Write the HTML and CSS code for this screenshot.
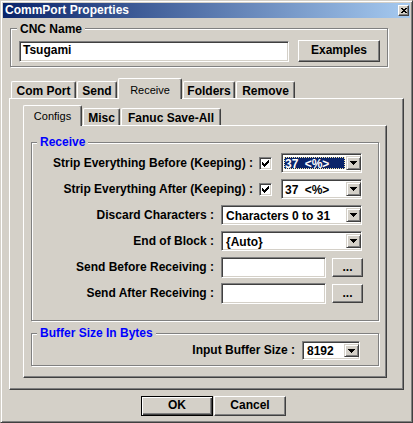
FILE: index.html
```html
<!DOCTYPE html>
<html lang="en">
<head>
    <meta charset="UTF-8">
    <title>CommPort Properties</title>
    <link rel="stylesheet" href="styles.css">
</head>
<body>
    <div class="window">
        <div class="titlebar">
            <span class="title">CommPort Properties</span>
            <span class="close">
                <svg width="6" height="5" viewBox="0 0 6 5" shape-rendering="crispEdges"><path d="M0 0h2v1h-2z M4 0h2v1h-2z M1 1h4v1h-4z M2 2h2v1h-2z M1 3h4v1h-4z M0 4h2v1h-2z M4 4h2v1h-2z" fill="#000"/></svg>
            </span>
        </div>

        <div class="client">
            <!-- CNC name -->
            <div class="group cnc">
                <div class="legend">CNC Name</div>
                <div class="cnc-row">
                    <div class="field cnc-name">Tsugami</div>
                    <div class="btn examples">Examples</div>
                </div>
            </div>

            <!-- main tabs -->
            <div class="tabs outer-tabs">
                <div class="tab w-com">Com Port</div>
                <div class="tab w-send">Send</div>
                <div class="tab active w-receive">Receive</div>
                <div class="tab w-folders">Folders</div>
                <div class="tab w-remove">Remove</div>
            </div>
            <div class="panel outer-panel">
                <div class="tabs inner-tabs">
                    <div class="tab active w-configs">Configs</div>
                    <div class="tab w-misc">Misc</div>
                    <div class="tab w-fanuc">Fanuc Save-All</div>
                </div>
                <div class="panel inner-panel">
                    <div class="group receive">
                        <div class="legend blue">Receive</div>
                        <div class="rows">
                            <div class="row">
                                <span class="label tight">Strip Everything Before (Keeping) :</span>
                                <span class="check"><svg width="7" height="7" viewBox="0 0 7 7" shape-rendering="crispEdges"><path d="M0 2h1v3h-1z M1 3h1v3h-1z M2 4h1v3h-1z M3 3h1v3h-1z M4 2h1v3h-1z M5 1h1v3h-1z M6 0h1v3h-1z" fill="#000"/></svg></span>
                                <div class="combo narrow">
                                    <span class="value focus">37 &lt;%&gt;</span>
                                    <span class="drop"><svg width="7" height="4" viewBox="0 0 7 4" shape-rendering="crispEdges"><path d="M0 0h7v1h-7z M1 1h5v1h-5z M2 2h3v1h-3z M3 3h1v1h-1z" fill="#000"/></svg></span>
                                </div>
                            </div>
                            <div class="row">
                                <span class="label tight">Strip Everything After (Keeping) :</span>
                                <span class="check"><svg width="7" height="7" viewBox="0 0 7 7" shape-rendering="crispEdges"><path d="M0 2h1v3h-1z M1 3h1v3h-1z M2 4h1v3h-1z M3 3h1v3h-1z M4 2h1v3h-1z M5 1h1v3h-1z M6 0h1v3h-1z" fill="#000"/></svg></span>
                                <div class="combo narrow">
                                    <span class="value">37 &lt;%&gt;</span>
                                    <span class="drop"><svg width="7" height="4" viewBox="0 0 7 4" shape-rendering="crispEdges"><path d="M0 0h7v1h-7z M1 1h5v1h-5z M2 2h3v1h-3z M3 3h1v1h-1z" fill="#000"/></svg></span>
                                </div>
                            </div>
                            <div class="row">
                                <span class="label">Discard Characters :</span>
                                <div class="combo wide">
                                    <span class="value">Characters 0 to 31</span>
                                    <span class="drop"><svg width="7" height="4" viewBox="0 0 7 4" shape-rendering="crispEdges"><path d="M0 0h7v1h-7z M1 1h5v1h-5z M2 2h3v1h-3z M3 3h1v1h-1z" fill="#000"/></svg></span>
                                </div>
                            </div>
                            <div class="row">
                                <span class="label">End of Block :</span>
                                <div class="combo wide">
                                    <span class="value">{Auto}</span>
                                    <span class="drop"><svg width="7" height="4" viewBox="0 0 7 4" shape-rendering="crispEdges"><path d="M0 0h7v1h-7z M1 1h5v1h-5z M2 2h3v1h-3z M3 3h1v1h-1z" fill="#000"/></svg></span>
                                </div>
                            </div>
                            <div class="row">
                                <span class="label tall">Send Before Receiving :</span>
                                <div class="field send"></div>
                                <div class="btn dots">...</div>
                            </div>
                            <div class="row">
                                <span class="label tall">Send After Receiving :</span>
                                <div class="field send"></div>
                                <div class="btn dots">...</div>
                            </div>
                        </div>
                    </div>

                    <div class="group buffer">
                        <div class="legend blue">Buffer Size In Bytes</div>
                        <div class="buffer-row">
                            <span class="label short">Input Buffer Size :</span>
                            <div class="combo small">
                                <span class="value">8192</span>
                                <span class="drop"><svg width="7" height="4" viewBox="0 0 7 4" shape-rendering="crispEdges"><path d="M0 0h7v1h-7z M1 1h5v1h-5z M2 2h3v1h-3z M3 3h1v1h-1z" fill="#000"/></svg></span>
                            </div>
                        </div>
                    </div>
                </div>
            </div>

            <div class="buttons">
                <div class="btn default">OK</div>
                <div class="btn cancel">Cancel</div>
            </div>
        </div>
    </div>
</body>
</html>
```

FILE: styles.css
```css
body {
    margin: 0;
    background: #d4d0c8;
    font: bold 12px "Liberation Sans", Arial, sans-serif;
    color: #000;
}

/* window frame */
.window {
    width: 413px;
    height: 423px;
    box-sizing: border-box;
    border: 1px solid;
    border-color: #d4d0c8 #404040 #404040 #d4d0c8;
    box-shadow: inset 1px 1px #fff, inset -1px -1px #808080;
    padding: 2px;
}
.titlebar {
    height: 15px;
    display: flex;
    align-items: center;
    padding-left: 2px;
    background: linear-gradient(to right, #0a246a, #a6caf0);
    color: #fff;
}
.title {
    flex: 1;
    line-height: 15px;
}
.close {
    width: 11px;
    height: 11px;
    box-sizing: border-box;
    margin-right: 1px;
    display: flex;
    align-items: center;
    justify-content: center;
    background: #d4d0c8;
    border: 1px solid;
    border-color: #fff #404040 #404040 #fff;
    box-shadow: inset -1px -1px #808080;
}
svg {
    display: block;
}

/* group boxes */
.group {
    box-sizing: border-box;
    border: 1px solid #808080;
    box-shadow: inset 1px 1px #fff, 1px 1px #fff;
}
.legend {
    display: table;
    height: 14px;
    line-height: 14px;
    padding: 0 3px;
    background: #d4d0c8;
}
.blue {
    color: #0000ff;
}

/* sunken fields and raised buttons */
.field, .combo, .check {
    box-sizing: border-box;
    background: #fff;
    border: 1px solid;
    border-color: #808080 #fff #fff #808080;
    box-shadow: inset 1px 1px #404040, inset -1px -1px #d4d0c8;
}
.field {
    padding-left: 3px;
    line-height: 17px;
}
.btn {
    box-sizing: border-box;
    text-align: center;
    background: #d4d0c8;
    border: 1px solid;
    border-color: #fff #404040 #404040 #fff;
    box-shadow: inset -1px -1px #808080;
}

.cnc {
    width: 378px;
    height: 39px;
    margin: 10px 0 0 7px;
}
.cnc .legend {
    margin: -7px 0 0 6px;
}
.cnc-row {
    display: flex;
    align-items: flex-start;
    gap: 9px;
    margin-top: 4px;
    padding-left: 8px;
}
.cnc-name {
    width: 270px;
    height: 21px;
    margin-top: 1px;
}
.examples {
    width: 82px;
    height: 22px;
    line-height: 18px;
}

/* tabs */
.tabs {
    display: flex;
    align-items: flex-end;
    gap: 1px;
    height: 20px;
}
.outer-tabs {
    margin: 11px 0 0 8px;
}
.tab {
    box-sizing: border-box;
    height: 17px;
    padding-top: 2px;
    line-height: 14px;
    text-align: center;
    white-space: nowrap;
    background: #d4d0c8;
    border: 1px solid #fff;
    border-bottom: 0;
    border-right-color: #404040;
    border-radius: 2px 2px 0 0;
    box-shadow: inset -1px 0 #808080;
}
.tab.active {
    position: relative;
    z-index: 1;
    height: 21px;
    margin-bottom: -1px;
    padding-top: 3px;
    font-size: 11px;
    font-weight: normal;
}
.outer-tabs .active {
    padding-top: 4px;
}
.w-com { width: 65px; }
.w-send { width: 40px; }
.w-receive { width: 64px; }
.w-folders { width: 52px; }
.w-remove { width: 59px; }
.w-configs { width: 59px; }
.w-misc { width: 37px; }
.w-fanuc { width: 100px; }

.panel {
    box-sizing: border-box;
    border: 1px solid;
    border-color: #fff #404040 #404040 #fff;
    box-shadow: inset -1px -1px #808080;
}
.outer-panel {
    width: 395px;
    height: 292px;
    margin-left: 6px;
    padding: 6px 0 0 13px;
}
.inner-panel {
    width: 364px;
    height: 253px;
    padding: 16px 0 0 7px;
}

/* receive group */
.receive {
    width: 348px;
    height: 179px;
}
.receive .legend, .buffer .legend {
    margin: -8px 0 0 5px;
}
.rows {
    padding-top: 4px;
}
.row {
    display: flex;
    justify-content: flex-end;
    align-items: flex-start;
    height: 26px;
    padding-right: 16px;
}
.label {
    line-height: 20px;
    white-space: nowrap;
    margin-right: 7px;
}
.label.tight {
    margin-right: 6px;
}
.label.tall {
    line-height: 21px;
}
.check {
    width: 13px;
    height: 13px;
    margin: 4px 9px 0 0;
    display: flex;
    align-items: center;
    justify-content: center;
}

.combo {
    display: flex;
    height: 20px;
    padding: 2px 0 2px 2px;
}
.combo.narrow { width: 81px; }
.combo.wide { width: 141px; }
.combo.small {
    width: 58px;
    height: 19px;
}
.value {
    flex: 1;
    line-height: 16px;
    padding-left: 2px;
    white-space: nowrap;
}
.narrow .value {
    padding-left: 1px;
    word-spacing: 3px;
}
.small .value {
    line-height: 15px;
}
.value.focus {
    margin: 1px 1px 1px 0;
    line-height: 14px;
    background: #0a246a;
    color: #fff;
    outline: 1px dotted #f6e7a6;
    outline-offset: -1px;
}
.drop {
    width: 15px;
    box-sizing: border-box;
    display: flex;
    align-items: center;
    justify-content: center;
    background: #d4d0c8;
    border: 1px solid;
    border-color: #d4d0c8 #404040 #404040 #d4d0c8;
    box-shadow: inset 1px 1px #fff, inset -1px -1px #808080;
}

.send {
    width: 105px;
    height: 21px;
}
.dots {
    width: 31px;
    height: 19px;
    margin: 1px -1px 0 6px;
    line-height: 17px;
}

/* buffer group */
.buffer {
    width: 348px;
    height: 33px;
    margin-top: 12px;
}
.buffer-row {
    display: flex;
    justify-content: flex-end;
    margin-top: 1px;
    padding-right: 18px;
}
.label.short {
    line-height: 19px;
}

/* dialog buttons */
.buttons {
    display: flex;
    gap: 1px;
    margin-top: 6px;
    padding-left: 138px;
}
.buttons .btn {
    width: 72px;
    height: 20px;
    line-height: 17px;
}
.btn.default {
    border-color: #000;
    box-shadow: inset 1px 1px #fff, inset -1px -1px #404040, inset -2px -2px #808080;
}
```
